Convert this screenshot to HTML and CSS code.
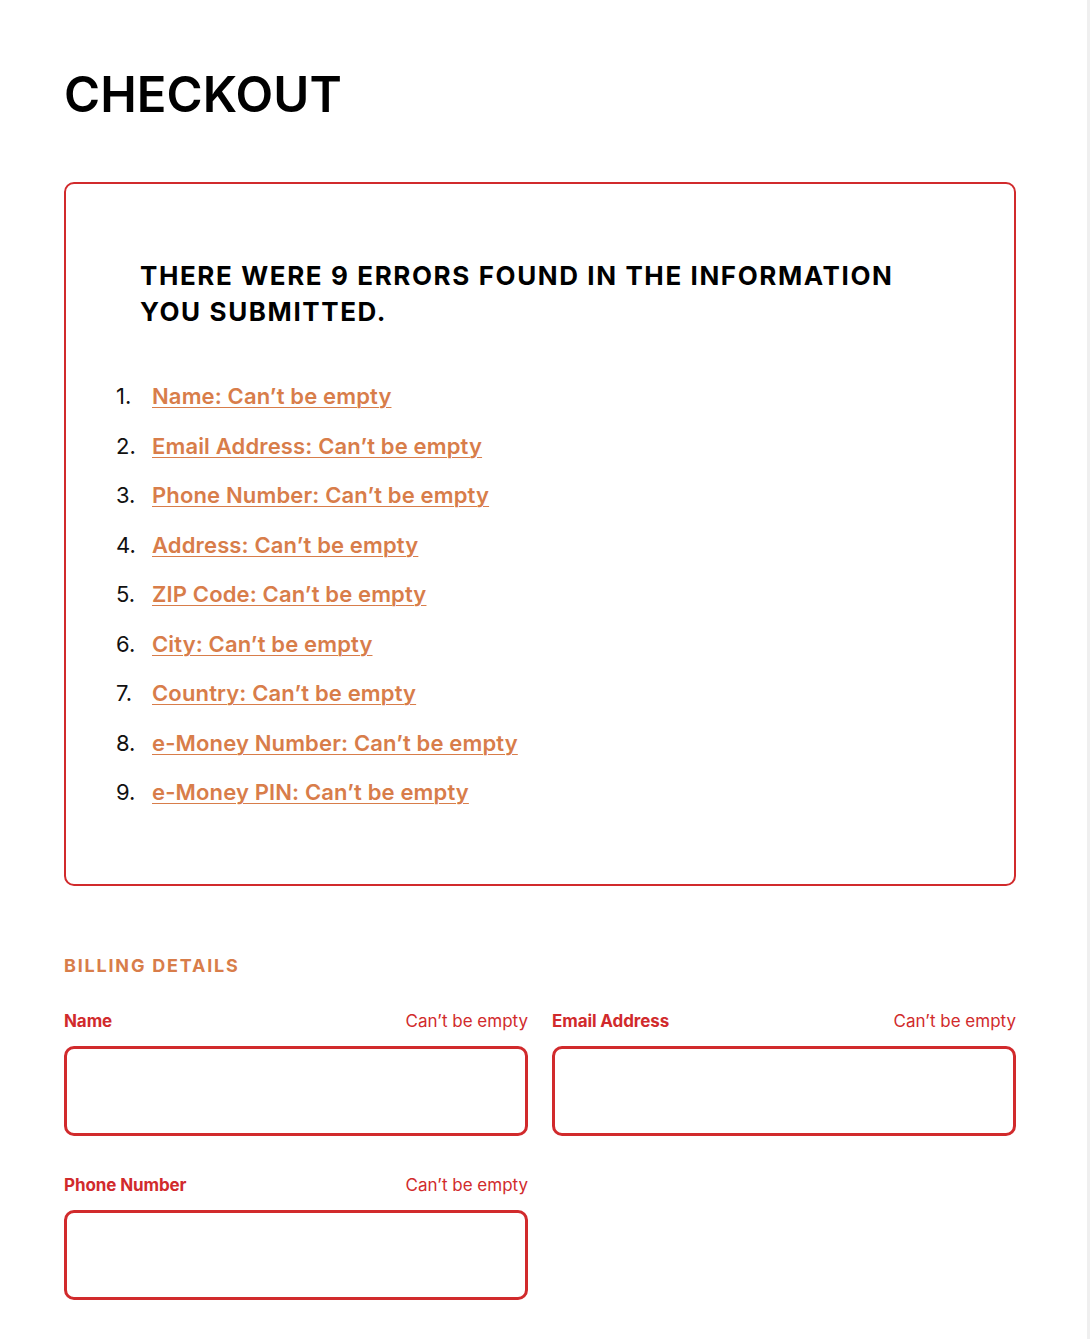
FILE: index.html
```html
<!DOCTYPE html>
<html lang="en">
<head>
<meta charset="utf-8">
<title>Checkout</title>
<link rel="stylesheet" href="styles.css">
</head>
<body>
<div class="page">
  <main class="checkout">
    <h1 class="title">CHECKOUT</h1>

    <section class="error-summary" role="alert">
      <h2 class="error-heading">THERE WERE 9 ERRORS FOUND IN THE INFORMATION YOU SUBMITTED.</h2>
      <ol class="error-list">
        <li><span class="num">1.</span><a href="#name">Name: Can’t be empty</a></li>
        <li><span class="num">2.</span><a href="#email">Email Address: Can’t be empty</a></li>
        <li><span class="num">3.</span><a href="#phone">Phone Number: Can’t be empty</a></li>
        <li><span class="num">4.</span><a href="#address">Address: Can’t be empty</a></li>
        <li><span class="num">5.</span><a href="#zip">ZIP Code: Can’t be empty</a></li>
        <li><span class="num">6.</span><a href="#city">City: Can’t be empty</a></li>
        <li><span class="num">7.</span><a href="#country">Country: Can’t be empty</a></li>
        <li><span class="num">8.</span><a href="#emoney">e-Money Number: Can’t be empty</a></li>
        <li><span class="num">9.</span><a href="#pin">e-Money PIN: Can’t be empty</a></li>
      </ol>
    </section>

    <section class="billing">
      <h3 class="section-title">BILLING DETAILS</h3>
      <div class="fields">
        <div class="field">
          <div class="label-row"><label for="name">Name</label><span class="err">Can’t be empty</span></div>
          <input id="name" class="input" type="text">
        </div>
        <div class="field">
          <div class="label-row"><label for="email">Email Address</label><span class="err">Can’t be empty</span></div>
          <input id="email" class="input" type="email">
        </div>
        <div class="field">
          <div class="label-row"><label for="phone">Phone Number</label><span class="err">Can’t be empty</span></div>
          <input id="phone" class="input" type="tel">
        </div>
      </div>
    </section>
  </main>
  <div class="edge"></div>
</div>
</body>
</html>
```

FILE: styles.css
```css
* { box-sizing: border-box; }
html, body { margin: 0; padding: 0; background: #fff; }
body {
  font-family: Inter, "Noto Sans", "Liberation Sans", sans-serif;
  color: #000;
}
.page {
  display: flex;
  min-height: 1339px;
}
.checkout {
  flex: 1;
  padding: 62px 0 40px 64px;
}
.edge {
  width: 3px;
  background: #efefef;
}
.title {
  margin: 0;
  width: 952px;
  font-size: 49px;
  font-weight: 600;
  line-height: 66px;
  letter-spacing: 0.1px;
}
.error-summary {
  width: 952px;
  margin-top: 54px;
  border: 2.5px solid #d12a2c;
  border-radius: 10px;
  padding: 74px 60px 76px 74px;
}
.error-heading {
  margin: 0;
  font-size: 26px;
  font-weight: 700;
  line-height: 36px;
  letter-spacing: 1.6px;
}
.error-list {
  list-style: none;
  margin: 50px 0 0 -24px;
  padding: 0;
  display: flex;
  flex-direction: column;
  gap: 17.5px;
}
.error-list li {
  display: flex;
  align-items: baseline;
  font-size: 22px;
  line-height: 32px;
}
.num {
  width: 36px;
  flex: none;
  color: #111;
}
.error-list a {
  color: #d87d4a;
  font-weight: 600;
  letter-spacing: 0.15px;
  text-decoration: underline;
  text-underline-offset: 3px;
  text-decoration-thickness: 1px;
}
.billing {
  width: 952px;
  margin-top: 68px;
}
.section-title {
  margin: 0;
  color: #d87d4a;
  font-size: 18px;
  font-weight: 700;
  letter-spacing: 1.8px;
  line-height: 24px;
}
.fields {
  margin-top: 32px;
  display: grid;
  grid-template-columns: 1fr 1fr;
  column-gap: 24px;
  row-gap: 38px;
}
.label-row {
  display: flex;
  justify-content: space-between;
  align-items: baseline;
  color: #d12a2c;
  font-size: 17px;
  line-height: 22px;
  margin-bottom: 14px;
}
.label-row label {
  font-weight: 700;
  letter-spacing: -0.1px;
}
.err {
  font-weight: 400;
  letter-spacing: 0;
}
.input {
  display: block;
  width: 100%;
  height: 90px;
  border: 3px solid #d12a2c;
  border-radius: 10px;
  background: #fff;
  font: inherit;
  outline: none;
}
```
